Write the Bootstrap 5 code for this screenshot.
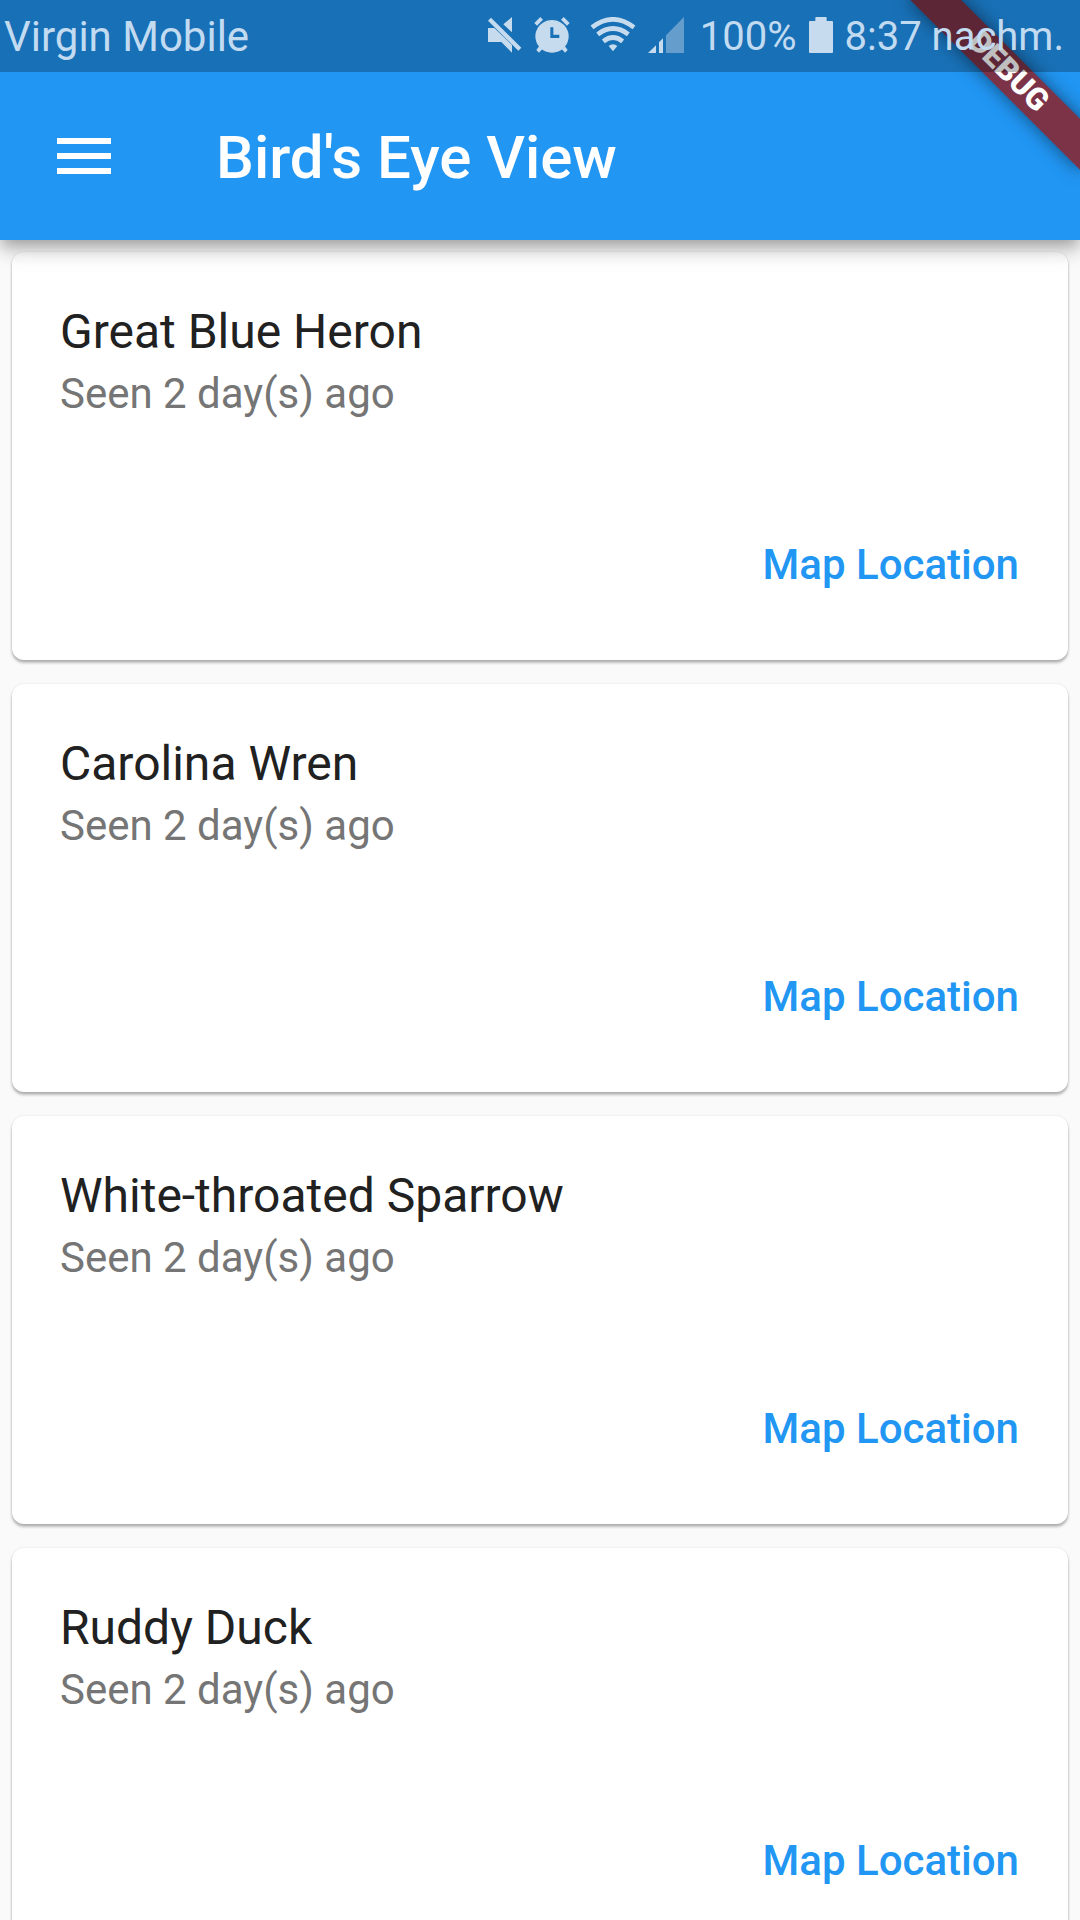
<!DOCTYPE html>
<html lang="en">
<head>
<meta charset="utf-8">
<meta name="viewport" content="width=device-width, initial-scale=1">
<title>Bird's Eye View</title>
<link href="https://cdn.jsdelivr.net/npm/bootstrap@5.3.0/dist/css/bootstrap.min.css" rel="stylesheet">
<style>
  body { font-family: Roboto, sans-serif; background: #fafafa; color: #212121; }
  .app-header { background: #2196f3; z-index: 2; box-shadow: 0 6px 12px -3px rgba(0,0,0,.2), 0 12px 15px rgba(0,0,0,.14), 0 3px 30px rgba(0,0,0,.12); }
  .status-bar { height: 72px; padding: 2px 16px 0 4px; background: rgba(0,0,0,.25); color: #c2dbf1; font-size: 42px; line-height: 70px; z-index: 2; }
  .status-icons { gap: 12px; }
  .status-clock { font-size: 40px; }
  .status-bar svg { fill: #c6dbed; margin-bottom: 4px; }
  .app-bar { height: 168px; padding: 0 48px; gap: 96px; }
  .app-title { font-size: 60px; line-height: 72px; font-weight: 500; padding-top: 4px; }
  .menu-btn svg { fill: #fff; }
  .ribbon-clip { inset: 0; z-index: 1; pointer-events: none; }
  .ribbon { top: 84px; right: -120px; width: 240px; height: 36px; transform: rotate(45deg); transform-origin: 50% -84px; background: #7c3348; box-shadow: 0 0 18px rgba(0,0,0,.5); font-size: 31px; line-height: 34px; font-weight: 900; }
  .sightings { padding: 12px; gap: 24px; scrollbar-width: none; }
  .sightings::-webkit-scrollbar { display: none; }
  .sighting { border: 0; border-radius: 12px; flex-shrink: 0; box-shadow: 0 3px 3px rgba(0,0,0,.2), 0 2px 3px rgba(0,0,0,.12), 0 0 3px rgba(0,0,0,.08); }
  .sighting .card-body { padding: 49px 48px 62px; }
  .bird-name { font-size: 48px; line-height: 62px; font-weight: 400; color: #212121; }
  .bird-seen { font-size: 42px; line-height: 62px; color: #757575; }
  .sighting-actions { padding: 24px 25px 41px; }
  .map-btn { height: 108px; padding: 0 24px; font-size: 42px; line-height: 48px; font-weight: 500; color: #2196f3; border: 0; }
</style>
<script src="https://cdn.jsdelivr.net/npm/bootstrap@5.3.0/dist/js/bootstrap.bundle.min.js"></script>
</head>
<body>
<div class="vh-100 d-flex flex-column overflow-hidden">
  <header class="app-header position-relative flex-shrink-0">
    <div class="status-bar position-relative d-flex align-items-center justify-content-between text-nowrap">
      <span>Virgin Mobile</span>
      <div class="status-icons d-flex align-items-center">
        <svg width="35" height="36" viewBox="48 51 105 108" role="img" aria-label="Muted"><path d="M51 84H70L123 135V158L91 126H51ZM97 73L123 51V97ZM60 53L151 143L142 152L51 62Z"/></svg>
        <svg width="36" height="36" viewBox="189 51 108 108" role="img" aria-label="Alarm"><path fill-rule="evenodd" d="M243 60a50 49 0 1 0 .1 0ZM238 82H247V104H265V114H238Z"/><path d="M208 51L216 59L198 77L190 69ZM278 51L270 59L288 77L296 69ZM205 138L214 147L204 158L196 150ZM281 138L272 147L282 158L290 150Z"/></svg>
        <svg class="ms-2" width="46" height="36" viewBox="356 51 138 108" role="img" aria-label="Wi-Fi"><g fill="none" stroke="#c6dbed" stroke-width="14"><path d="M362 82Q425 34 488 82"/><path d="M379 103Q425 68 471 103"/><path d="M396 124Q425 101 454 124"/></g><path d="M412 138Q425 127 438 138L425 154Z"/></svg>
        <svg width="36" height="36" viewBox="528 48 108 108" role="img" aria-label="Signal"><path d="M528 156L552 133V156ZM561 124L573 112V156H561Z"/><path fill="#659dcd" d="M582 103L636 48V156H582Z"/></svg>
        <span class="status-clock ms-1">100%</span>
        <svg width="24" height="36" viewBox="354 51 72 108" role="img" aria-label="Battery full"><path d="M376 51H404Q407 51 407 54V63H423Q426 63 426 66V156Q426 159 423 159H357Q354 159 354 156V66Q354 63 357 63H373V54Q373 51 376 51Z"/></svg>
        <span class="status-clock">8:37 nachm.</span>
      </div>
    </div>
    <div class="app-bar d-flex align-items-center">
      <button type="button" class="menu-btn btn p-0 border-0 lh-1" aria-label="Open menu"><svg width="72" height="72" viewBox="0 0 24 24"><path d="M3 18h18v-2H3v2zm0-5h18v-2H3v2zm0-7v2h18V6H3z"/></svg></button>
      <h1 class="app-title m-0 text-white">Bird's Eye View</h1>
    </div>
    <div class="ribbon-clip position-absolute overflow-hidden">
      <div class="ribbon position-absolute text-center text-white">DEBUG</div>
    </div>
  </header>
  <main class="sightings flex-grow-1 overflow-auto d-flex flex-column">
    <article class="sighting card">
      <div class="card-body"><h2 class="bird-name m-0">Great Blue Heron</h2><p class="bird-seen m-0">Seen 2 day(s) ago</p></div>
      <div class="sighting-actions d-flex justify-content-end"><button type="button" class="map-btn btn">Map Location</button></div>
    </article>
    <article class="sighting card">
      <div class="card-body"><h2 class="bird-name m-0">Carolina Wren</h2><p class="bird-seen m-0">Seen 2 day(s) ago</p></div>
      <div class="sighting-actions d-flex justify-content-end"><button type="button" class="map-btn btn">Map Location</button></div>
    </article>
    <article class="sighting card">
      <div class="card-body"><h2 class="bird-name m-0">White-throated Sparrow</h2><p class="bird-seen m-0">Seen 2 day(s) ago</p></div>
      <div class="sighting-actions d-flex justify-content-end"><button type="button" class="map-btn btn">Map Location</button></div>
    </article>
    <article class="sighting card">
      <div class="card-body"><h2 class="bird-name m-0">Ruddy Duck</h2><p class="bird-seen m-0">Seen 2 day(s) ago</p></div>
      <div class="sighting-actions d-flex justify-content-end"><button type="button" class="map-btn btn">Map Location</button></div>
    </article>
  </main>
</div>
</body>
</html>
